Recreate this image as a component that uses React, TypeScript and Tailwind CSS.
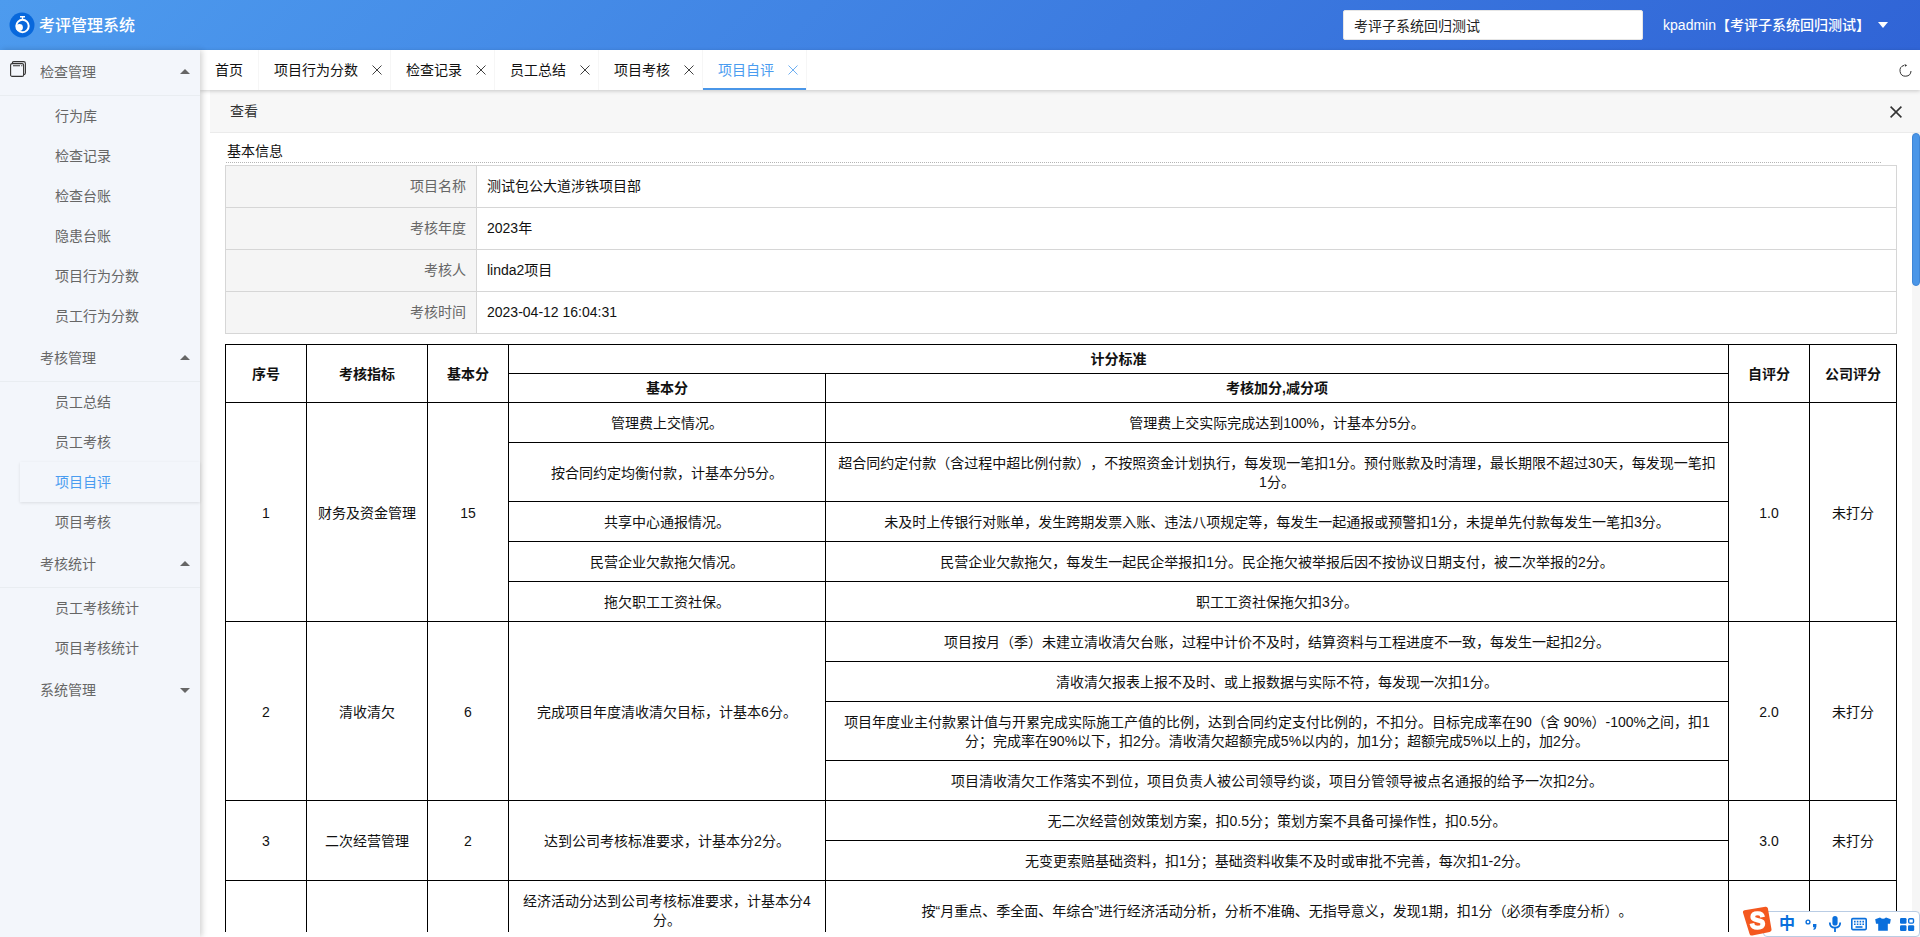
import { useState } from "react";

type MenuGroup = {
  title: string;
  open: boolean;
  icon?: boolean;
  children: string[];
};

type ScoreRow = {
  basic?: string;
  basicSpan?: number;
  rule: string;
};

type ScoreGroup = {
  no: string;
  name: string;
  base: string;
  self: string;
  company: string;
  rows: ScoreRow[];
};

const menus: MenuGroup[] = [
  {
    title: "检查管理",
    open: true,
    icon: true,
    children: ["行为库", "检查记录", "检查台账", "隐患台账", "项目行为分数", "员工行为分数"]
  },
  { title: "考核管理", open: true, children: ["员工总结", "员工考核", "项目自评", "项目考核"] },
  { title: "考核统计", open: true, children: ["员工考核统计", "项目考核统计"] },
  { title: "系统管理", open: false, children: [] }
];

const tabs = ["首页", "项目行为分数", "检查记录", "员工总结", "项目考核", "项目自评"];

const info = [
  ["项目名称", "测试包公大道涉铁项目部"],
  ["考核年度", "2023年"],
  ["考核人", "linda2项目"],
  ["考核时间", "2023-04-12 16:04:31"]
];

const groups: ScoreGroup[] = [
  {
    no: "1",
    name: "财务及资金管理",
    base: "15",
    self: "1.0",
    company: "未打分",
    rows: [
      { basic: "管理费上交情况。", rule: "管理费上交实际完成达到100%，计基本分5分。" },
      {
        basic: "按合同约定均衡付款，计基本分5分。",
        rule: "超合同约定付款（含过程中超比例付款），不按照资金计划执行，每发现一笔扣1分。预付账款及时清理，最长期限不超过30天，每发现一笔扣1分。"
      },
      {
        basic: "共享中心通报情况。",
        rule: "未及时上传银行对账单，发生跨期发票入账、违法八项规定等，每发生一起通报或预警扣1分，未提单先付款每发生一笔扣3分。"
      },
      {
        basic: "民营企业欠款拖欠情况。",
        rule: "民营企业欠款拖欠，每发生一起民企举报扣1分。民企拖欠被举报后因不按协议日期支付，被二次举报的2分。"
      },
      { basic: "拖欠职工工资社保。", rule: "职工工资社保拖欠扣3分。" }
    ]
  },
  {
    no: "2",
    name: "清收清欠",
    base: "6",
    self: "2.0",
    company: "未打分",
    rows: [
      {
        basic: "完成项目年度清收清欠目标，计基本6分。",
        basicSpan: 4,
        rule: "项目按月（季）未建立清收清欠台账，过程中计价不及时，结算资料与工程进度不一致，每发生一起扣2分。"
      },
      { rule: "清收清欠报表上报不及时、或上报数据与实际不符，每发现一次扣1分。" },
      {
        rule: "项目年度业主付款累计值与开累完成实际施工产值的比例，达到合同约定支付比例的，不扣分。目标完成率在90（含 90%）-100%之间，扣1分；完成率在90%以下，扣2分。清收清欠超额完成5%以内的，加1分；超额完成5%以上的，加2分。"
      },
      { rule: "项目清收清欠工作落实不到位，项目负责人被公司领导约谈，项目分管领导被点名通报的给予一次扣2分。" }
    ]
  },
  {
    no: "3",
    name: "二次经营管理",
    base: "2",
    self: "3.0",
    company: "未打分",
    rows: [
      {
        basic: "达到公司考核标准要求，计基本分2分。",
        basicSpan: 2,
        rule: "无二次经营创效策划方案，扣0.5分；策划方案不具备可操作性，扣0.5分。"
      },
      { rule: "无变更索赔基础资料，扣1分；基础资料收集不及时或审批不完善，每次扣1-2分。" }
    ]
  },
  {
    no: "",
    name: "",
    base: "",
    self: "",
    company: "",
    rows: [
      {
        basic: "经济活动分达到公司考核标准要求，计基本分4分。",
        rule: "按“月重点、季全面、年综合”进行经济活动分析，分析不准确、无指导意义，发现1期，扣1分（必须有季度分析）。"
      }
    ]
  }
];

const th = "border border-black py-[5px] font-bold leading-[18px]";
const td = "border border-black px-[10px] pb-[9px] pt-[11px] leading-[19px]";

function CloseIcon({ className }: { className: string }) {
  return (
    <svg viewBox="0 0 10 10" className={className} fill="none" stroke="currentColor">
      <path d="M.5.5l9 9M9.5.5l-9 9" />
    </svg>
  );
}

function Header() {
  return (
    <header className="flex h-[50px] shrink-0 items-center bg-linear-135/srgb from-[#4d9bee] to-[#3064d6] text-white">
      <svg viewBox="0 0 26 26" className="ml-[9px] size-[26px]">
        <circle cx="13" cy="13" r="12.5" fill="#0868dc" />
        <circle cx="13.5" cy="14" r="6.200" fill="none" stroke="#fff" strokeWidth="2" />
        <circle cx="10.500" cy="15.500" r="3.400" fill="#fff" />
        <path d="M11 4.700h5M13.500 5v2.500" stroke="#fff" strokeWidth="1.400" />
      </svg>
      <h1 className="ml-1 pt-[2px] text-base font-medium">考评管理系统</h1>
      <input
        aria-label="所属系统"
        defaultValue="考评子系统回归测试"
        className="ml-auto h-[30px] w-[300px] rounded-xs border border-[#e6e6e6] bg-white px-[10px] text-sm text-[#222]"
      />
      <button type="button" className="ml-5 mr-8 flex items-center gap-2 text-sm font-medium">
        kpadmin【考评子系统回归测试】
        <svg viewBox="0 0 10 6" className="h-[6px] w-[10px]" fill="currentColor">
          <path d="M0 0h10L5 6z" />
        </svg>
      </button>
    </header>
  );
}

function SideMenu() {
  const [active, setActive] = useState("项目自评");

  return (
    <nav className="z-10 w-[200px] shrink-0 bg-[#f3f6fb] text-[#666] shadow-[2px_0_6px_rgba(0,0,0,0.18)]">
      {menus.map((menu) => (
        <div key={menu.title}>
          <button
            type="button"
            className={
              menu.open
                ? "relative flex h-[46px] w-full items-center justify-between border-b border-[#e9edf1] pb-[2px] pl-10 pr-[10px]"
                : "relative flex h-[46px] w-full items-center justify-between pb-[2px] pl-10 pr-[10px]"
            }
          >
            {menu.icon && (
              <svg
                viewBox="0 0 16 16"
                className="absolute left-[10px] top-[11px] size-4"
                fill="none"
                stroke="#333"
                strokeWidth="1.1"
              >
                <rect x=".6" y="2.6" width="13" height="12.8" rx="1.5" />
                <path d="M2.4 2.4V2Q2.4.6 3.8.6h9.8q1.8 0 1.8 1.8V12q0 1.4-1.6 1.6M3 4.8h7M11.2 4.8h1.2" />
              </svg>
            )}
            <span>{menu.title}</span>
            <svg viewBox="0 0 10 5" className="h-[5px] w-[10px]" fill="currentColor">
              <path d={menu.open ? "M0 5h10L5 0z" : "M0 0h10L5 5z"} />
            </svg>
          </button>
          {menu.children.map((item) => (
            <button
              key={item}
              type="button"
              onClick={() => setActive(item)}
              className={
                item === active
                  ? "ml-5 block h-10 w-[180px] pl-[35px] text-left text-[#4a9cf0] shadow-[0_1px_3px_rgba(0,0,0,0.1)]"
                  : "ml-5 block h-10 w-[180px] pl-[35px] text-left"
              }
            >
              {item}
            </button>
          ))}
        </div>
      ))}
    </nav>
  );
}

function TabBar() {
  const [current, setCurrent] = useState("项目自评");

  return (
    <div className="z-5 flex h-10 shrink-0 items-center bg-white shadow-[0_1px_4px_rgba(0,0,0,0.2)]">
      {tabs.map((tab, i) => (
        <div
          key={tab}
          className={
            tab === current
              ? "relative flex h-10 items-center border-r border-[#f6f6f6] text-[#4a9cf0]"
              : "relative flex h-10 items-center border-r border-[#f6f6f6] text-[#111]"
          }
        >
          <button
            type="button"
            onClick={() => setCurrent(tab)}
            className={i > 0 ? "h-10 pl-[15px] pr-[14px]" : "h-10 px-[15px]"}
          >
            {tab}
          </button>
          {i > 0 && (
            <button type="button" aria-label={"关闭" + tab} className="pr-2 opacity-80">
              <CloseIcon className="size-[10px]" />
            </button>
          )}
          {tab === current && <span className="absolute inset-x-0 bottom-0 h-[2px] bg-[#4a96e8]" />}
        </div>
      ))}
      <button type="button" aria-label="刷新" className="ml-auto mr-2">
        <svg viewBox="0 0 13 13" className="size-[13px]" fill="none" stroke="#333" strokeWidth="1">
          <path d="M5 1.400A5.500 5.500 0 1 0 12 7" />
          <path d="M5.500 0L8.200 1.200 6 2.800z" fill="#333" stroke="none" />
        </svg>
      </button>
    </div>
  );
}

function InfoTable() {
  return (
    <table className="w-full border-collapse">
      <tbody>
        {info.map(([label, value]) => (
          <tr key={label} className="h-[42px]">
            <th className="w-[251px] border border-[#d6d6d6] bg-[#f5f5f5] pb-[2px] pr-[10px] text-right font-normal text-[#666]">
              {label}
            </th>
            <td className="border border-[#d6d6d6] pb-[2px] pl-[10px]">{value}</td>
          </tr>
        ))}
      </tbody>
    </table>
  );
}

function ScoreTable() {
  return (
    <table className="mt-[10px] w-full table-fixed border-collapse text-center">
      <colgroup>
        <col className="w-[81px]" />
        <col className="w-[121px]" />
        <col className="w-[81px]" />
        <col className="w-[317px]" />
        <col />
        <col className="w-[81px]" />
        <col className="w-[87px]" />
      </colgroup>
      <thead>
        <tr>
          <th rowSpan={2} className={th}>序号</th>
          <th rowSpan={2} className={th}>考核指标</th>
          <th rowSpan={2} className={th}>基本分</th>
          <th colSpan={2} className={th}>计分标准</th>
          <th rowSpan={2} className={th}>自评分</th>
          <th rowSpan={2} className={th}>公司评分</th>
        </tr>
        <tr>
          <th className={th}>基本分</th>
          <th className={th}>考核加分,减分项</th>
        </tr>
      </thead>
      <tbody>
        {groups.map((group) =>
          group.rows.map((row, i) => (
            <tr key={row.rule}>
              {i === 0 && (
                <>
                  <td rowSpan={group.rows.length} className={td}>{group.no}</td>
                  <td rowSpan={group.rows.length} className={td}>{group.name}</td>
                  <td rowSpan={group.rows.length} className={td}>{group.base}</td>
                </>
              )}
              {row.basic && (
                <td rowSpan={row.basicSpan || 1} className={td}>{row.basic}</td>
              )}
              <td className={td}>{row.rule}</td>
              {i === 0 && (
                <>
                  <td rowSpan={group.rows.length} className={td}>{group.self}</td>
                  <td rowSpan={group.rows.length} className={td}>{group.company}</td>
                </>
              )}
            </tr>
          ))
        )}
      </tbody>
    </table>
  );
}

// 输入法状态栏，悬浮在右下角
function ImeBar() {
  return (
    <div className="fixed bottom-0 right-0 z-20 flex h-[26px] items-center gap-2 rounded-sm border border-[#b9cce4] bg-white pl-[15px] pr-1 text-[#0a6fdc]">
      <svg viewBox="0 0 32 32" className="absolute -left-[22px] -top-[6px] size-[30px]">
        <path d="M1 7Q.6 5 2.600 4.600L25 .8Q27 .5 27.600 2.500L31.500 25Q31.800 27 29.500 27.600L11 31.500Q8.500 32 8 29.500z" fill="#f4581f" />
        <text
          x="16.500"
          y="25"
          textAnchor="middle"
          fontSize="25"
          fontWeight="bold"
          fontFamily="Liberation Sans, sans-serif"
          fill="#fff"
          stroke="#fff"
          strokeWidth="1.500"
        >
          S
        </text>
      </svg>
      <span className="w-4 text-center text-base font-bold leading-4">中</span>
      <svg viewBox="0 0 16 16" className="size-4" fill="currentColor">
        <circle cx="5" cy="6" r="1.900" fill="none" stroke="currentColor" strokeWidth="1.400" />
        <path d="M10 8h3.400v2.500q0 2.500-2.600 3.500l-.6-1q1.200-.7 1.300-1.800H10z" />
      </svg>
      <svg viewBox="0 0 16 16" className="size-4" fill="none" stroke="currentColor" strokeWidth="1.800">
        <rect x="5.400" y="0" width="5.200" height="9.500" rx="2.600" fill="currentColor" stroke="none" />
        <path d="M2.800 6.500q0 5.200 5.200 5.200t5.200-5.200M8 12v4" />
      </svg>
      <svg viewBox="0 0 16 16" className="size-4" fill="none" stroke="currentColor" strokeWidth="1.600">
        <rect x=".8" y="2.600" width="14.400" height="11" rx="1" />
        <path d="M3 5.600h10M3 8.200h10" strokeDasharray="1.600 1.200" />
        <path d="M4.500 11h7" />
      </svg>
      <svg viewBox="0 0 16 16" className="size-4" fill="currentColor">
        <path d="M5 1.500q3 2.400 6 0l4.800 1.800-.8 4.500H12.800v7h-9.600V7.800H1L.2 3.300z" />
      </svg>
      <svg viewBox="0 0 16 16" className="size-4" fill="currentColor">
        <rect x="1" y="2" width="6.500" height="5.800" rx="1.200" />
        <rect x="9.700" y="2.700" width="4.800" height="4.400" rx="1" fill="none" stroke="currentColor" strokeWidth="1.400" />
        <rect x="1" y="9.200" width="6.500" height="5.800" rx="1.200" />
        <rect x="9" y="9.200" width="6.200" height="5.800" rx="1.200" />
      </svg>
    </div>
  );
}

export default function App() {
  return (
    <div className="flex h-screen flex-col overflow-hidden bg-white font-['Liberation_Sans','Noto_Sans_CJK_SC',sans-serif] text-sm text-[#111] [text-spacing-trim:space-all]">
      <Header />
      <div className="flex min-h-0 flex-1">
        <SideMenu />
        <main className="flex min-w-0 flex-1 flex-col">
          <TabBar />
          <section className="relative ml-[10px] flex min-h-0 flex-1 flex-col pb-[5px]">
            <div className="flex h-[43px] shrink-0 items-center justify-between border-b border-[#ebebeb] bg-[#f7f7f7] pl-5 pr-[18px] text-[#333]">
              <h2>查看</h2>
              <button type="button" aria-label="关闭" className="pt-[2px]">
                <CloseIcon className="size-3 stroke-[1.3]" />
              </button>
            </div>
            <div className="min-h-0 flex-1 overflow-y-auto pl-[15px] pr-[23px] pt-2 [scrollbar-width:none]">
              <h3 className="mb-[2px] ml-px mr-4 border-b border-dotted border-[#b4b4b4] pl-px leading-[21px]">基本信息</h3>
              <InfoTable />
              <ScoreTable />
            </div>
            <div className="absolute bottom-0 right-0 top-[43px] w-2 bg-[#f6f6f6]">
              <div className="h-[153px] rounded-full border border-[#3f86d6] bg-[#4a96e8]" />
            </div>
          </section>
        </main>
      </div>
      <ImeBar />
    </div>
  );
}
